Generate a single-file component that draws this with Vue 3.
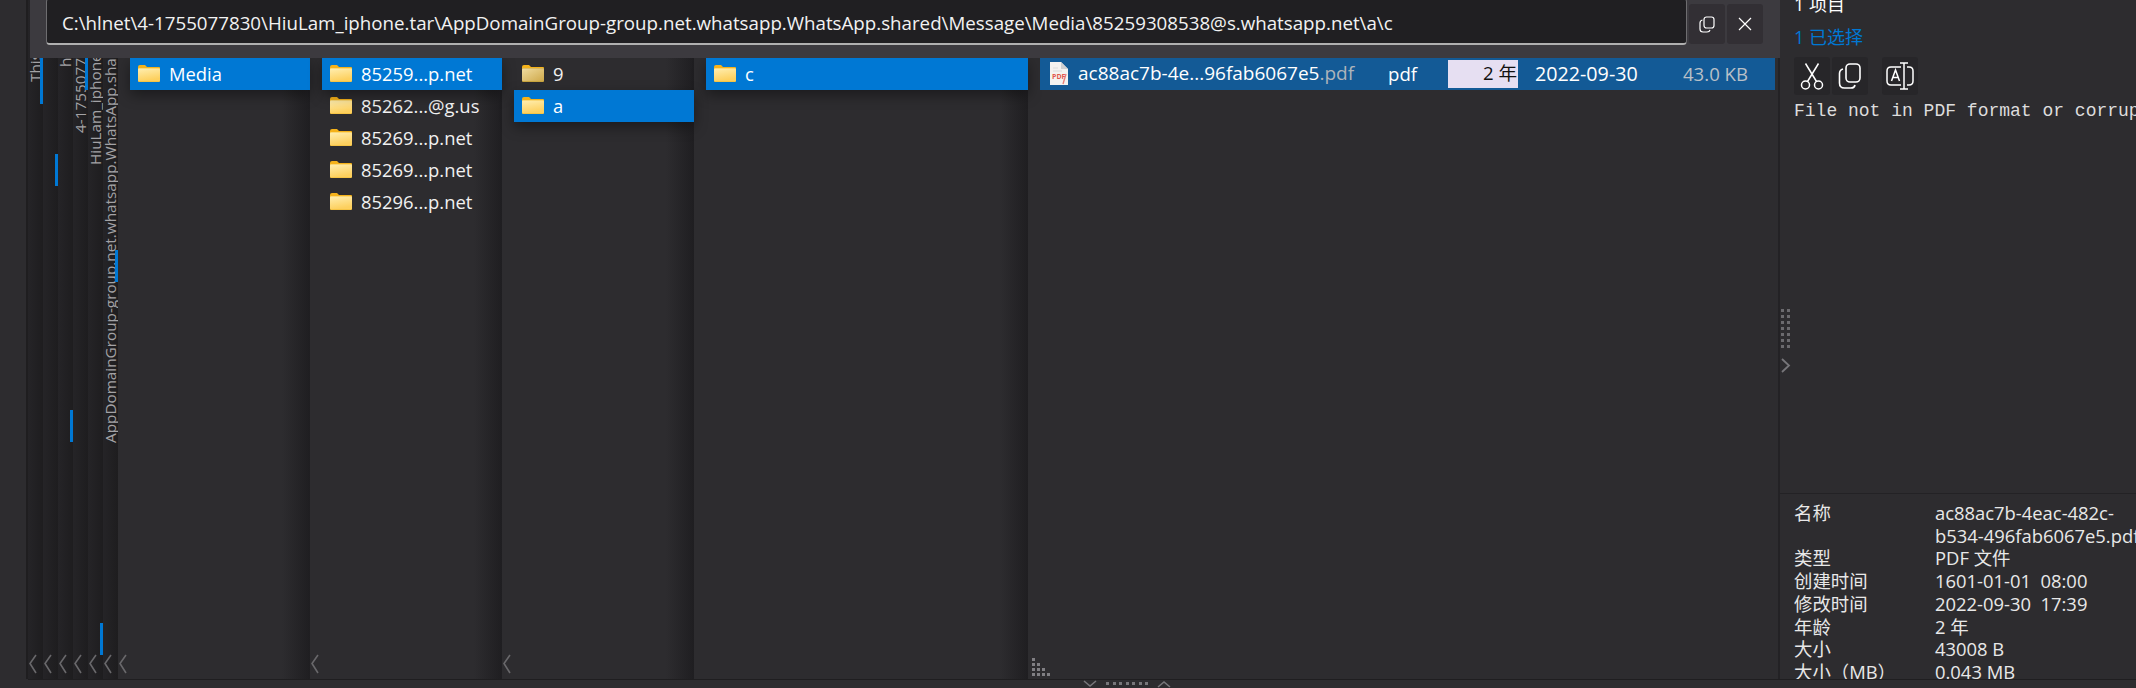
<template>
  <div class="page">
    <div class="main">
      <div class="gutter"></div>

      <div class="collapsed-cols">
        <div v-for="(col, i) in collapsedCols" :key="i" class="collapsed">
          <div class="vtext" :style="{ height: col.bottom + 'px' }">{{ col.text }}</div>
          <span class="marker" :style="{ top: col.markTop + 'px', height: col.markH + 'px' }"></span>
          <svg class="chev" width="10" height="20" viewBox="0 0 10 20"><path d="M8 1 L2 9.5 L8 19" fill="none" stroke="#69686b" stroke-width="1.6" /></svg>
        </div>
      </div>

      <div v-for="col in folderCols" :key="col.id" class="col" :class="col.id">
        <div
          v-for="(row, i) in col.rows"
          :key="i"
          class="row"
          :class="{ selected: row.selected }"
        >
          <svg class="folder" width="22" height="17" viewBox="0 0 22 17">
            <path d="M0 2 Q0 0 2 0 H7 L9 2 H21 Q22 2 22 3 V6 H0 Z" fill="#f5b21a" />
            <rect x="0" y="3" width="22" height="14" rx="1" :fill="row.dim ? '#c9a53f' : '#f6c445'" />
            <rect x="0" y="3.5" width="22" height="12.5" rx="1" :fill="row.dim ? 'url(#folderDim)' : 'url(#folderFill)'" />
          </svg>
          <span class="name">{{ row.name }}</span>
        </div>
        <svg v-if="col.chev" class="chev" width="10" height="20" viewBox="0 0 10 20"><path d="M8 1 L2 9.5 L8 19" fill="none" stroke="#69686b" stroke-width="1.6" /></svg>
      </div>

      <div class="col files">
        <div class="file-row">
          <svg class="pdf" width="20" height="25" viewBox="0 0 20 25">
            <path d="M1 1 H12 L19 8 V24 H1 Z" fill="#f4f2f0" />
            <path d="M12 1 V8 H19 Z" fill="#cfd0d2" />
            <path d="M4 7 H9 M4 10 H13" stroke="#dcdcdc" stroke-width="1" />
            <path d="M17 13 L14 23" stroke="#e8807a" stroke-width="1.4" />
          </svg>
          <span class="pdf-tag">PDF</span>
          <span class="file-name">ac88ac7b-4e...96fab6067e5<span class="ext">.pdf</span></span>
          <span class="file-type">pdf</span>
          <span class="file-age">2 年</span>
          <span class="file-date">2022-09-30</span>
          <span class="file-size">43.0 KB</span>
        </div>
        <div class="grip">
          <i v-for="n in gripDots" :key="n.id" :style="{ gridColumn: n.c, gridRow: n.r }"></i>
        </div>
      </div>

      <div class="panel">
        <div class="splitter">
          <div class="split-dots"><i v-for="n in 14" :key="n"></i></div>
          <svg width="10" height="16" viewBox="0 0 10 16"><path d="M1 1 L8 7.5 L1 14" fill="none" stroke="#77767a" stroke-width="1.8" /></svg>
        </div>
        <div class="panel-top">
          <div class="count">1 项目</div>
          <div class="count picked">1 已选择</div>
          <div class="actions">
            <button class="act" title="cut">
              <svg width="24" height="28" viewBox="0 0 24 28" fill="none" stroke="#fff" stroke-width="1.5">
                <circle cx="5.5" cy="23" r="4" />
                <circle cx="18.5" cy="23" r="4" />
                <path d="M7.5 19.5 L18.5 1.5 M16.5 19.5 L5.5 1.5" />
              </svg>
            </button>
            <button class="act" title="copy">
              <svg width="24" height="26" viewBox="0 0 24 26" fill="none" stroke="#fff" stroke-width="1.6">
                <rect x="8" y="1" width="14" height="18" rx="4" />
                <path d="M5 6 Q1.5 7 1.5 10.5 V20 Q1.5 25 6.5 25 H13 Q16.5 25 17 22" />
              </svg>
            </button>
            <button class="act act-rename" title="rename">
              <svg width="28" height="28" viewBox="0 0 28 28" fill="none" stroke="#fff" stroke-width="1.5">
                <path d="M15 5 H5 Q1 5 1 9 V19 Q1 23 5 23 H15 M21 5 H23 Q27 5 27 9 V19 Q27 23 23 23 H21" />
                <path d="M14 1 H22 M18 1 V27 M14 27 H22" />
                <path d="M5.5 19 L9.5 8 L13.5 19 M7 15.5 H12" />
              </svg>
            </button>
          </div>
          <div class="preview">File not in PDF format or corrupted</div>
        </div>
        <div class="props">
          <template v-for="p in props" :key="p.label">
            <span>{{ p.label }}</span>
            <span>{{ p.value }}<template v-if="p.more"><br>{{ p.more }}</template></span>
          </template>
        </div>
      </div>

      <div class="topbar">
        <div class="path">C:\hlnet\4-1755077830\HiuLam_iphone.tar\AppDomainGroup-group.net.whatsapp.WhatsApp.shared\Message\Media\85259308538@s.whatsapp.net\a\c</div>
        <button class="bar-btn">
          <svg width="16" height="17" viewBox="0 0 16 17" fill="none" stroke="#fff" stroke-width="1.2">
            <rect x="5" y="1" width="10" height="11" rx="2.5" />
            <path d="M3.5 4 Q1 4.5 1 7 V13 Q1 16 4 16 H8 Q10.5 16 11 14" />
          </svg>
        </button>
        <button class="bar-btn">
          <svg width="14" height="14" viewBox="0 0 14 14" fill="none" stroke="#fff" stroke-width="1.2"><path d="M1 1 L13 13 M13 1 L1 13" /></svg>
        </button>
      </div>
    </div>

    <div class="bottom">
      <svg width="14" height="8" viewBox="0 0 14 8"><path d="M1 1 L7 6 L13 1" fill="none" stroke="#77767a" stroke-width="1.6" /></svg>
      <div class="bottom-dots"><i v-for="n in 7" :key="n"></i></div>
      <svg width="14" height="8" viewBox="0 0 14 8"><path d="M1 7 L7 2 L13 7" fill="none" stroke="#77767a" stroke-width="1.6" /></svg>
    </div>

    <svg width="0" height="0" class="defs">
      <defs>
        <linearGradient id="folderFill" x1="0" y1="0" x2="0.3" y2="1">
          <stop offset="0" stop-color="#ffeeb0" />
          <stop offset="1" stop-color="#fdd05e" />
        </linearGradient>
        <linearGradient id="folderDim" x1="0" y1="0" x2="1" y2="1">
          <stop offset="0" stop-color="#f0dca0" />
          <stop offset="1" stop-color="#cfa94a" />
        </linearGradient>
      </defs>
    </svg>
  </div>
</template>

<script setup>
const collapsedCols = [
  { text: 'This PC', bottom: 82, markTop: 58, markH: 46 },
  { text: '', bottom: 0, markTop: 154, markH: 32 },
  { text: 'hlnet', bottom: 67, markTop: 410, markH: 32 },
  { text: '4-1755077830', bottom: 133, markTop: 58, markH: 32 },
  { text: 'HiuLam_iphone.tar', bottom: 165, markTop: 623, markH: 32 },
  { text: 'AppDomainGroup-group.net.whatsapp.WhatsApp.shared', bottom: 443, markTop: 250, markH: 32 }
]

const folderCols = [
  { id: 'c1', chev: true, rows: [{ name: 'Media', selected: true }] },
  {
    id: 'c2',
    chev: true,
    rows: [
      { name: '85259...p.net', selected: true },
      { name: '85262...@g.us' },
      { name: '85269...p.net' },
      { name: '85269...p.net' },
      { name: '85296...p.net' }
    ]
  },
  { id: 'c3', chev: true, rows: [{ name: '9', dim: true }, { name: 'a', selected: true }] },
  { id: 'c4', chev: false, rows: [{ name: 'c', selected: true }] }
]

// resize grip in the file list, a small stair of dots
const gripDots = []
for (let r = 1; r <= 4; r++) {
  for (let c = 1; c <= r; c++) {
    gripDots.push({ id: r + '-' + c, r, c })
  }
}

const props = [
  { label: '名称', value: 'ac88ac7b-4eac-482c-', more: 'b534-496fab6067e5.pdf' },
  { label: '类型', value: 'PDF 文件' },
  { label: '创建时间', value: '1601-01-01  08:00' },
  { label: '修改时间', value: '2022-09-30  17:39' },
  { label: '年龄', value: '2 年' },
  { label: '大小', value: '43008 B' },
  { label: '大小（MB）', value: '0.043 MB' }
]
</script>

<style>
html,
body {
  margin: 0;
  background: #2d2c2f;
  overflow: hidden;
}
</style>

<style scoped>
.page {
  width: 2136px;
  height: 688px;
  display: flex;
  flex-direction: column;
  overflow: hidden;
  background: #2d2c2f;
  color: #fff;
  font-family: "Open Sans", "Noto Sans CJK SC", sans-serif;
  font-size: 18px;
}

.defs {
  position: absolute;
}

.main {
  position: relative;
  height: 679px;
  display: flex;
}

.gutter {
  width: 26px;
  flex: none;
}

.collapsed-cols {
  display: flex;
  flex: none;
  border-left: 2px solid #1f1e20;
}

.collapsed {
  position: relative;
  width: 15px;
  overflow: hidden;
  background: linear-gradient(to right, #252427, #1e1d1f);
}

.vtext {
  writing-mode: vertical-rl;
  transform: rotate(180deg);
  white-space: nowrap;
  overflow: hidden;
  width: 15px;
  color: #a3a2a5;
  line-height: 15px;
  font-size: 15.3px;
}

.marker {
  position: absolute;
  right: 0;
  width: 3px;
  background: #0078d4;
}

.chev {
  position: absolute;
  left: 0;
  bottom: 5px;
}

.col {
  position: relative;
  flex: none;
  box-sizing: border-box;
  padding: 58px 0 0 12px;
  background: linear-gradient(to right, transparent calc(100% - 28px), #1f1e21 100%);
}

.c1, .c2, .c3 {
  width: 192px;
}

.c4 {
  width: 334px;
  padding-right: 0;
}

.row {
  height: 32px;
  box-sizing: border-box;
  padding-bottom: 2px;
  display: flex;
  align-items: center;
  gap: 9px;
  padding-left: 8px;
  font-size: 18.4px;
  color: #f1f1f1;
}

.row.selected {
  background: #0078d4;
  color: #fff;
  box-shadow: 0 5px 14px rgba(0, 0, 0, 0.4);
  position: relative;
}

.folder {
  flex: none;
}

.files {
  width: 750px;
  padding-right: 3px;
  background: none;
}

.file-row {
  position: relative;
  height: 32px;
  width: 735px;
  box-sizing: border-box;
  padding-bottom: 2px;
  display: flex;
  align-items: center;
  background: #135a96;
  font-size: 18.6px;
}

.pdf {
  position: absolute;
  left: 9px;
  top: 3px;
}

.pdf-tag {
  position: absolute;
  left: 12px;
  top: 15px;
  font-size: 7px;
  line-height: 8px;
  font-weight: 700;
  color: #e2574c;
}

.file-name {
  position: absolute;
  left: 38px;
  color: #fff;
  font-size: 19px;
}

.ext {
  color: #aeb4bb;
}

.file-type {
  position: absolute;
  left: 348px;
}

.file-age {
  position: absolute;
  left: 408px;
  top: 2px;
  width: 70px;
  height: 28px;
  box-sizing: border-box;
  padding-right: 1px;
  line-height: 26px;
  text-align: right;
  color: #111;
  background: #e6dff2;
}

.file-date {
  position: absolute;
  left: 495px;
  font-size: 19.7px;
}

.file-size {
  position: absolute;
  right: 27px;
  color: #b9c0c8;
}

.grip {
  position: absolute;
  left: 4px;
  bottom: 3px;
  display: grid;
  grid-template-columns: repeat(4, 3px);
  grid-template-rows: repeat(4, 3px);
  gap: 2px;
}

.grip i {
  background: #807f83;
}

.panel {
  position: relative;
  flex: 1;
  min-width: 0;
  display: flex;
  flex-direction: column;
  overflow: hidden;
  border-left: 2px solid #232225;
  padding-left: 14px;
}

.splitter {
  position: absolute;
  left: 0;
  top: 309px;
  display: flex;
  flex-direction: column;
  gap: 10px;
  padding-left: 1px;
}

.split-dots {
  display: grid;
  grid-template-columns: repeat(2, 3px);
  gap: 3px;
}

.split-dots i {
  height: 3px;
  background: #6b6a6e;
}

.panel-top {
  flex: 1;
  min-height: 0;
  margin-top: -9px;
}

.count {
  height: 33px;
  line-height: 27px;
  font-size: 18px;
}

.picked {
  color: #0078d4;
}

.actions {
  display: flex;
  height: 38px;
  gap: 2px;
}

.act {
  width: 36px;
  height: 38px;
  display: flex;
  align-items: center;
  justify-content: center;
  padding: 0;
  border: 0;
  border-radius: 3px;
  background: #272629;
}

.act-rename {
  margin-left: 12px;
}

.preview {
  margin-top: 6px;
  font-family: "Liberation Mono", monospace;
  font-size: 18px;
  white-space: nowrap;
  color: #ddd;
}

.props {
  height: 186px;
  flex: none;
  margin-left: -14px;
  padding-left: 14px;
  padding-top: 8px;
  box-sizing: border-box;
  border-top: 1px solid #232225;
  display: grid;
  grid-template-columns: 141px 1fr;
  grid-auto-rows: min-content;
  line-height: 22.7px;
  font-size: 18.4px;
  color: #e8e8e8;
  white-space: pre;
  overflow: hidden;
}

.topbar {
  position: absolute;
  left: 30px;
  top: 0;
  width: 1750px;
  height: 58px;
  box-sizing: border-box;
  display: flex;
  align-items: flex-start;
  gap: 2px;
  padding-left: 16px;
  background: #3c3a3f;
}

.path {
  width: 1641px;
  height: 47px;
  margin-top: -2px;
  box-sizing: border-box;
  padding: 2px 15px 0;
  line-height: 43px;
  font-size: 18.73px;
  color: #f2f2f2;
  white-space: nowrap;
  background: #201f22;
  border: 1px solid #6e6d70;
  border-bottom: 2px solid #b0b0b0;
  border-radius: 4px;
}

.bar-btn {
  width: 36px;
  height: 40px;
  margin-top: 4px;
  display: flex;
  align-items: center;
  justify-content: center;
  padding: 0;
  border: 0;
  border-radius: 3px;
  background: #322f34;
}

.bottom {
  height: 9px;
  box-sizing: border-box;
  margin-left: 28px;
  padding-left: 90px;
  border-top: 1px solid #1f1e20;
  display: flex;
  align-items: flex-start;
  justify-content: center;
  gap: 9px;
  overflow: hidden;
}

.bottom-dots {
  display: flex;
  gap: 3.5px;
  padding-top: 2px;
}

.bottom-dots i {
  width: 3px;
  height: 3px;
  background: #77767a;
}
</style>
